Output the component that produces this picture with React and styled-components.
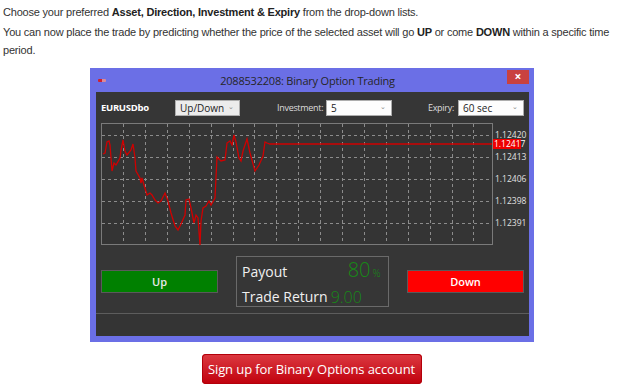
import styled, { createGlobalStyle } from "styled-components";

const GlobalStyle = createGlobalStyle`
  html, body {
    margin: 0;
    padding: 0;
    background: #ffffff;
  }
  body {
    font-family: "Liberation Sans", Arial, sans-serif;
  }
`;

const Page = styled.div`
  width: 623px;
  height: 391px;
  overflow: hidden;
  padding-top: 3px;
  box-sizing: border-box;
`;

const Intro = styled.p`
  margin: 0 0 2px;
  padding-left: 3px;
  width: 616px;
  font-size: 11px;
  letter-spacing: -0.2px;
  line-height: 18px;
  color: #333;

  b {
    color: #222;
  }
`;

const Window = styled.div`
  margin: 9px 0 0 90px;
  width: 444px;
  background: #6b6fe6;
  padding: 0 5px 6px 6px;
  box-sizing: border-box;
  font-family: "Open Sans", "Noto Sans", sans-serif;
`;

const TitleBar = styled.div`
  height: 24px;
  display: flex;
  align-items: center;
`;

const AppIcon = styled.span`
  width: 8px;
  height: 3px;
  margin-left: 2px;
  background: linear-gradient(90deg, #d02030 50%, #d98a9a 50%);
  border-radius: 1px;
`;

const Title = styled.div`
  flex: 1;
  text-align: center;
  font-size: 11px;
  letter-spacing: -0.2px;
  color: #262626;
  margin-left: 2px;
`;

const Close = styled.div`
  width: 22px;
  height: 14px;
  margin-top: -7px;
  background: #c9413f;
  color: #fff;
  font-size: 12px;
  font-weight: 700;
  line-height: 14px;
  text-align: center;
`;

const Body = styled.div`
  background: #363636;
`;

const Toolbar = styled.div`
  height: 31px;
  display: flex;
  align-items: center;
  padding: 0 5px;
  font-size: 10px;
  color: #e6e6e6;

  & > * {
    flex-shrink: 0;
  }
`;

const Asset = styled.div`
  font-weight: 700;
  font-size: 9.5px;
  letter-spacing: -0.3px;
  color: #fff;
  width: 74px;
`;

const Label = styled.span`
  width: ${(p) => p.$w}px;
  margin: 0 ${(p) => p.$after}px 0 ${(p) => p.$gap}px;
  font-size: 9px;
  letter-spacing: -0.3px;
  white-space: nowrap;
  color: #dcdcdc;
`;

const Select = styled.div`
  width: ${(p) => p.$w}px;
  height: 16px;
  box-sizing: border-box;
  border: 1px solid #adadad;
  color: #222;
  font-size: 10px;
  display: flex;
  align-items: center;
  justify-content: space-between;
  padding: 0 5px 0 4px;
  background: ${(p) => (p.$grey ? "#ececec" : "#fdfdfd")};
`;

const Chevron = styled.span`
  font-size: 7px;
  color: #888;
  margin-top: -3px;
`;

const ChartWrap = styled.div`
  padding-left: 5px;
  height: 123px;
`;

const TradeRow = styled.div`
  display: flex;
  align-items: flex-start;
  padding: 10px 5px 0;
  height: 61px;
  box-sizing: border-box;
`;

const TradeButton = styled.div`
  width: 117px;
  height: 23px;
  margin-top: 14px;
  box-sizing: border-box;
  border: 1px solid #5a5a5a;
  background: ${(p) => p.$bg};
  color: ${(p) => p.$fg};
  font-size: 11px;
  font-weight: 600;
  display: flex;
  align-items: center;
  justify-content: center;
`;

const PayoutBox = styled.div`
  width: 153px;
  height: 51px;
  margin: 0 18px;
  box-sizing: border-box;
  border: 1px solid #6a6a6a;
  padding: 1px 0 0 5px;
  color: #f0f0f0;
  font-size: 14px;
  display: grid;
  grid-template-columns: auto 1fr;
  align-items: center;
  line-height: 24px;
`;

const Green = styled.span`
  color: #178a17;
  font-weight: 300;
  font-size: ${(p) => p.$size}px;
  padding-left: ${(p) => p.$pad}px;

  small {
    font-size: 10px;
    margin-left: 2px;
  }
`;

const StatusBar = styled.div`
  height: 22px;
  border-top: 1px solid #5d5d5d;
  margin-top: 6px;
  background: #343434;
`;

const Footer = styled.div`
  display: flex;
  justify-content: center;
  margin-top: 12px;
`;

const SignUp = styled.div`
  width: 220px;
  height: 30px;
  border-radius: 4px;
  background: linear-gradient(#dc3a42, #c0000c);
  box-shadow: inset 0 0 0 1px #b3000a;
  color: #fff;
  font-family: "Open Sans", "Noto Sans", sans-serif;
  font-size: 13px;
  display: flex;
  align-items: center;
  justify-content: center;
  letter-spacing: -0.1px;
`;

const points = [
  [2, 31], [4, 30], [6, 19], [8, 18], [9, 22], [11, 48], [13, 40], [15, 42],
  [19, 35], [20, 27], [22, 17], [24, 28], [26, 32], [30, 27], [32, 21], [34, 35],
  [35, 48], [39, 55], [40, 60], [41, 55], [43, 62], [46, 72], [49, 70], [51, 72],
  [54, 77], [57, 80], [60, 78], [64, 70], [67, 78], [70, 90], [74, 103], [77, 107],
  [80, 101], [84, 92], [85, 77], [88, 76], [90, 85], [93, 100], [95, 92], [97, 95],
  [99, 122], [100, 98], [102, 85], [105, 83], [108, 78], [110, 82], [114, 75],
  [116, 34], [119, 37], [120, 38], [124, 37], [126, 20], [129, 18], [131, 22],
  [133, 12], [135, 19], [138, 35], [140, 38], [142, 28], [144, 22], [146, 16],
  [149, 30], [154, 48], [158, 42], [162, 33], [164, 19], [166, 20], [169, 21],
  [391, 21],
];

const levels = [
  { y: 12, label: "1.12420" },
  { y: 34, label: "1.12413" },
  { y: 56, label: "1.12406" },
  { y: 78, label: "1.12398" },
  { y: 100, label: "1.12391" },
];

const Chart = () => (
  <svg width="428" height="123" viewBox="0 0 428 123">
    <rect x="0.5" y="0.5" width="391" height="121" fill="#343434" stroke="#7a7a7a" />
    {levels.map((l) => (
      <line key={l.y} x1="1" x2="391" y1={l.y + 0.5} y2={l.y + 0.5}
        stroke="#8c8c8c" strokeDasharray="3 3" />
    ))}
    {Array.from({ length: 17 }, (_, i) => {
      const x = Math.round(22 + i * 21.9) + 0.5;
      return (
        <line key={i} x1={x} x2={x} y1="1" y2="121"
          stroke="#8c8c8c" strokeDasharray="3 3" />
      );
    })}
    <polyline
      points={points.map((p) => p.join(",")).join(" ")}
      fill="none"
      stroke="#d00000"
      strokeWidth="1.3"
    />
    {levels.map((l) => (
      <text key={l.label} x="394" y={l.y + 3} fontSize="8.5"
        fontFamily="Open Sans, sans-serif" fill="#e0e0e0">
        {l.label}
      </text>
    ))}
    <rect x="392" y="16" width="28" height="10" fill="#ee0000" />
    <text x="393" y="24" fontSize="8.5" fontFamily="Open Sans, sans-serif" fill="#fff">
      1.12417
    </text>
  </svg>
);

export default function App() {
  return (
    <Page>
      <GlobalStyle />
      <Intro>
        Choose your preferred <b>Asset, Direction, Investment &amp; Expiry</b> from the drop-down lists.
      </Intro>
      <Intro>
        You can now place the trade by predicting whether the price of the selected asset will go{" "}
        <b>UP</b> or come <b>DOWN</b> within a specific time period.
      </Intro>
      <Window>
        <TitleBar>
          <AppIcon />
          <Title>2088532208: Binary Option Trading</Title>
          <Close>×</Close>
        </TitleBar>
        <Body>
          <Toolbar>
            <Asset>EURUSDbo</Asset>
            <Select $w={65} $grey>
              Up/Down <Chevron>⌄</Chevron>
            </Select>
            <Label $w={46} $gap={37} $after={3}>Investment:</Label>
            <Select $w={66}>
              5 <Chevron>⌄</Chevron>
            </Select>
            <Label $w={25} $gap={36} $after={5}>Expiry:</Label>
            <Select $w={66}>
              60 sec <Chevron>⌄</Chevron>
            </Select>
          </Toolbar>
          <ChartWrap>
            <Chart />
          </ChartWrap>
          <TradeRow>
            <TradeButton $bg="#008000" $fg="#e8e8e8">Up</TradeButton>
            <PayoutBox>
              <span>Payout</span>
              <Green $size={20} $pad={20}>80<small>%</small></Green>
              <span>Trade Return</span>
              <Green $size={16} $pad={3}>9.00</Green>
            </PayoutBox>
            <TradeButton $bg="#ff0000" $fg="#ffffff">Down</TradeButton>
          </TradeRow>
          <StatusBar />
        </Body>
      </Window>
      <Footer>
        <SignUp>Sign up for Binary Options account</SignUp>
      </Footer>
    </Page>
  );
}
